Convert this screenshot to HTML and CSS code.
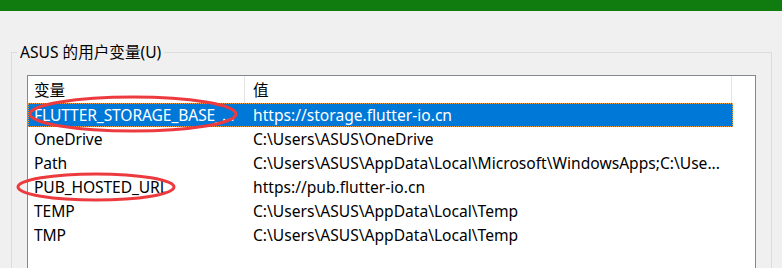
FILE: index.html
```html
<!DOCTYPE html>
<html lang="zh-CN">

<head>
    <meta charset="UTF-8">
    <meta name="viewport" content="width=device-width, initial-scale=1.0">
    <title>环境变量</title>
    <link rel="stylesheet" href="styles.css">
</head>

<body>

    <div class="title_bar"></div>

    <fieldset class="group_box">
        <legend>ASUS 的用户变量(U)</legend>

        <div class="list_view">
            <div class="list_header">
                <div class="col_name">变量</div>
                <div class="col_value">值</div>
            </div>

            <div class="list_row selected">
                <div class="col_name">FLUTTER_STORAGE_BASE_...</div>
                <div class="col_value">https://storage.flutter-io.cn</div>
            </div>
            <div class="list_row">
                <div class="col_name">OneDrive</div>
                <div class="col_value">C:\Users\ASUS\OneDrive</div>
            </div>
            <div class="list_row">
                <div class="col_name">Path</div>
                <div class="col_value">C:\Users\ASUS\AppData\Local\Microsoft\WindowsApps;C:\Use...</div>
            </div>
            <div class="list_row">
                <div class="col_name">PUB_HOSTED_URL</div>
                <div class="col_value">https://pub.flutter-io.cn</div>
            </div>
            <div class="list_row">
                <div class="col_name">TEMP</div>
                <div class="col_value">C:\Users\ASUS\AppData\Local\Temp</div>
            </div>
            <div class="list_row">
                <div class="col_name">TMP</div>
                <div class="col_value">C:\Users\ASUS\AppData\Local\Temp</div>
            </div>
        </div>
    </fieldset>

    <!-- red marks drawn over the screenshot -->
    <svg class="marks" width="782" height="268" viewBox="0 0 782 268">
        <ellipse cx="133" cy="114" rx="103" ry="17" />
        <ellipse cx="96" cy="187" rx="78" ry="13" />
    </svg>

</body>

</html>
```

FILE: styles.css
```css
*{
    box-sizing: border-box;
}

body{
    margin: 0;
    width: 782px;
    height: 268px;
    overflow: hidden;
    background-color: #f0f0f0;
    font-family: "Noto Sans", "Noto Sans CJK SC", sans-serif;
    font-size: 15.6px;
    color: #000;
    position: relative;
}

.title_bar{
    height: 11px;
    background-color: #107c10;
}

.group_box{
    margin: 31px 10px 0 11px;
    padding: 0 15px;
    border: 1px solid #dcdcdc;
    border-bottom: none;
    height: 226px;
}

.group_box legend{
    padding: 0 3px;
    margin-left: -10px;
    line-height: 20px;
}

.list_view{
    margin-top: 13px;
    background-color: #fff;
    border: 1px solid #828790;
    border-bottom: none;
    height: 193px;
}

.list_header{
    display: flex;
    height: 27px;
    width: 704px;
}

.list_header .col_name,
.list_header .col_value{
    border-right: 1px solid #e5e5e5;
    display: flex;
    align-items: center;
}

.list_row{
    display: flex;
    height: 24px;
    width: 705px;
    align-items: center;
    white-space: nowrap;
}

.col_name{
    width: 217px;
    flex-shrink: 0;
    padding-left: 6px;
    letter-spacing: -0.1px;
}

.col_value{
    flex: 1;
    padding-left: 8px;
    overflow: hidden;
}

.selected{
    background-color: #0078d7;
    color: #fff;
    outline: 1px dotted #f0a040;
    outline-offset: -1px;
}

.marks{
    position: absolute;
    left: 0;
    top: 0;
    pointer-events: none;
}

.marks ellipse{
    fill: none;
    stroke: #ec3a3f;
    stroke-width: 3;
}
```
